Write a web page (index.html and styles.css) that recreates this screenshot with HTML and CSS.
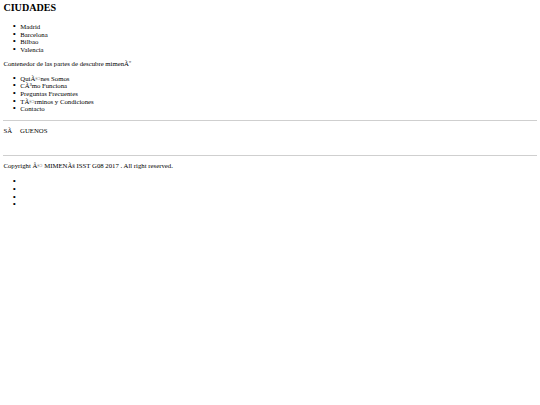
FILE: index.html
```html
<!DOCTYPE html>
<html lang="es">
<head>
<meta charset="utf-8">
<title>mimenú</title>
<link rel="stylesheet" href="styles.css">
</head>
<body class="page">
<section class="cities">
  <h1 class="cities-title">CIUDADES</h1>
  <ul class="list">
    <li>Madrid</li>
    <li>Barcelona</li>
    <li>Bilbao</li>
    <li>Valencia</li>
  </ul>
</section>
<p class="text">Contenedor de las partes de descubre mimenÃº</p>
<ul class="list">
  <li>QuiÃ©nes Somos</li>
  <li>CÃ³mo Funciona</li>
  <li>Preguntas Frecuentes</li>
  <li>TÃ©rminos y Condiciones</li>
  <li>Contacto</li>
</ul>
<hr class="rule">
<p class="text">SÃ<span class="gap"></span>GUENOS</p>
<p class="text spacer">&nbsp;</p>
<hr class="rule">
<p class="text copyright">Copyright Â© MIMENÃš ISST G08 2017 . All right reserved.</p>
<ul class="list social">
  <li></li>
  <li></li>
  <li></li>
  <li></li>
</ul>
</body>
</html>
```

FILE: styles.css
```css
.page {
  margin: 3.4px;
  font-family: "Liberation Serif", "Times New Roman", serif;
  font-size: 6.75px;
  line-height: 7.65px;
  color: #000;
  background: #fff;
}
.cities {
  display: block;
}
.cities-title {
  font-size: 10.1px;
  line-height: 10px;
  font-weight: bold;
  margin: 0 0 9.5px;
}
.list {
  margin: 6.75px 0;
  padding-left: 16.9px;
  list-style: disc;
}
.list li {
  min-height: 7.65px;
}
.list li::marker {
  content: "\2022\2002";
  font-size: 9px;
}
.social {
  margin-top: 9.2px;
}
.text {
  margin: 6.75px 0;
}
.spacer {
  line-height: 6px;
}
.copyright {
  margin-top: 6px;
}
.gap {
  display: inline-block;
  width: 8px;
}
.rule {
  margin: 6.75px 0 0;
  height: 0;
  border: 0;
  border-top: 1px solid #cfcfcf;
}
```
